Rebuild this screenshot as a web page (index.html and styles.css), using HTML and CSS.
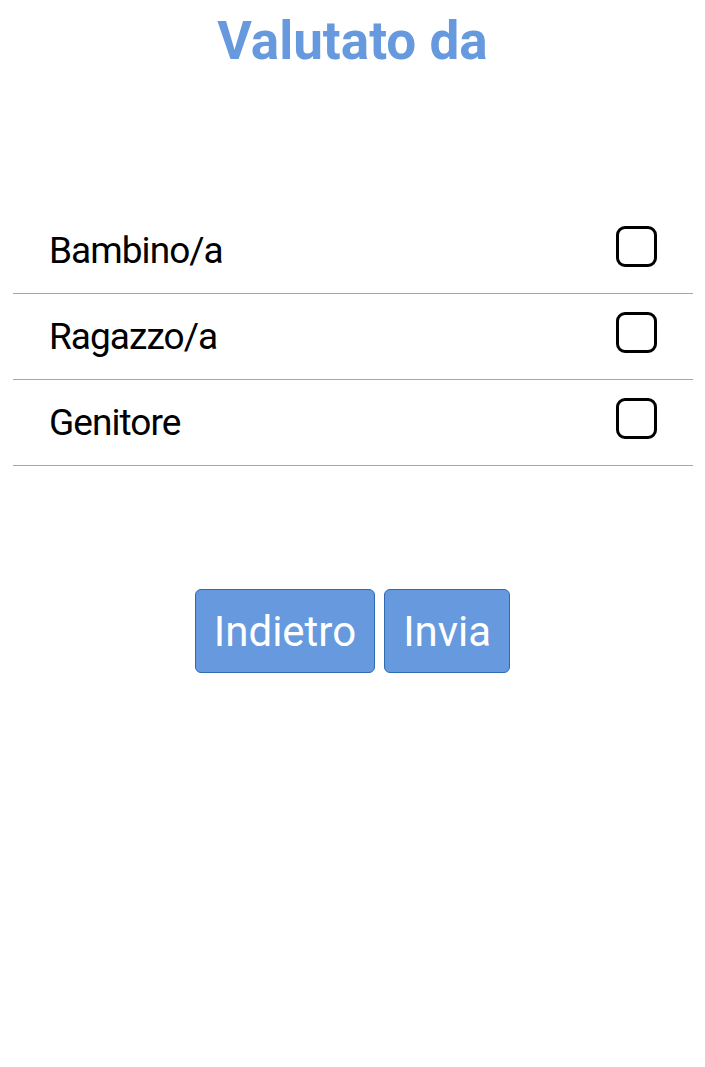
FILE: index.html
```html
<!DOCTYPE html>
<html lang="it">
<head>
<meta charset="utf-8">
<link rel="stylesheet" href="styles.css">
</head>
<body>
<h1 class="title">Valutato da</h1>
<ul class="list">
  <li class="row"><span class="label">Bambino/a</span><span class="check"></span></li>
  <li class="row"><span class="label">Ragazzo/a</span><span class="check"></span></li>
  <li class="row"><span class="label">Genitore</span><span class="check"></span></li>
</ul>
<div class="actions">
  <button class="btn">Indietro</button>
  <button class="btn">Invia</button>
</div>
</body>
</html>
```
FILE: styles.css
```css
html, body {
  margin: 0;
  padding: 0;
  background: #ffffff;
  font-family: Roboto, "Noto Sans", sans-serif;
}
.title {
  margin: 0;
  padding-top: 9px;
  height: 199px;
  box-sizing: border-box;
  text-align: center;
  font-size: 53px;
  line-height: 64px;
  font-weight: 700;
  color: #6699dd;
}
.list {
  list-style: none;
  margin: 0 12px 0 13px;
  padding: 0;
  padding-top: 9px;
}
.row {
  display: flex;
  align-items: center;
  justify-content: space-between;
  height: 85px;
  border-bottom: 1px solid #a6a6a6;
  padding: 0 36px;
}
.label {
  font-size: 37px;
  letter-spacing: -0.95px;
  color: #000;
  padding-top: 0;
}
.check {
  width: 41px;
  height: 41px;
  box-sizing: border-box;
  border: 3.5px solid #000;
  border-radius: 9px;
  margin-top: -9px;
}
.actions {
  display: flex;
  justify-content: center;
  gap: 9px;
  margin-top: 123px;
}
.btn {
  height: 84px;
  padding: 0 18px;
  background: #6699dd;
  border: 1px solid #2d6cae;
  border-radius: 6px;
  color: #ffffff;
  font-family: Roboto, "Noto Sans", sans-serif;
  font-size: 42px;
  font-weight: 400;
}
```
